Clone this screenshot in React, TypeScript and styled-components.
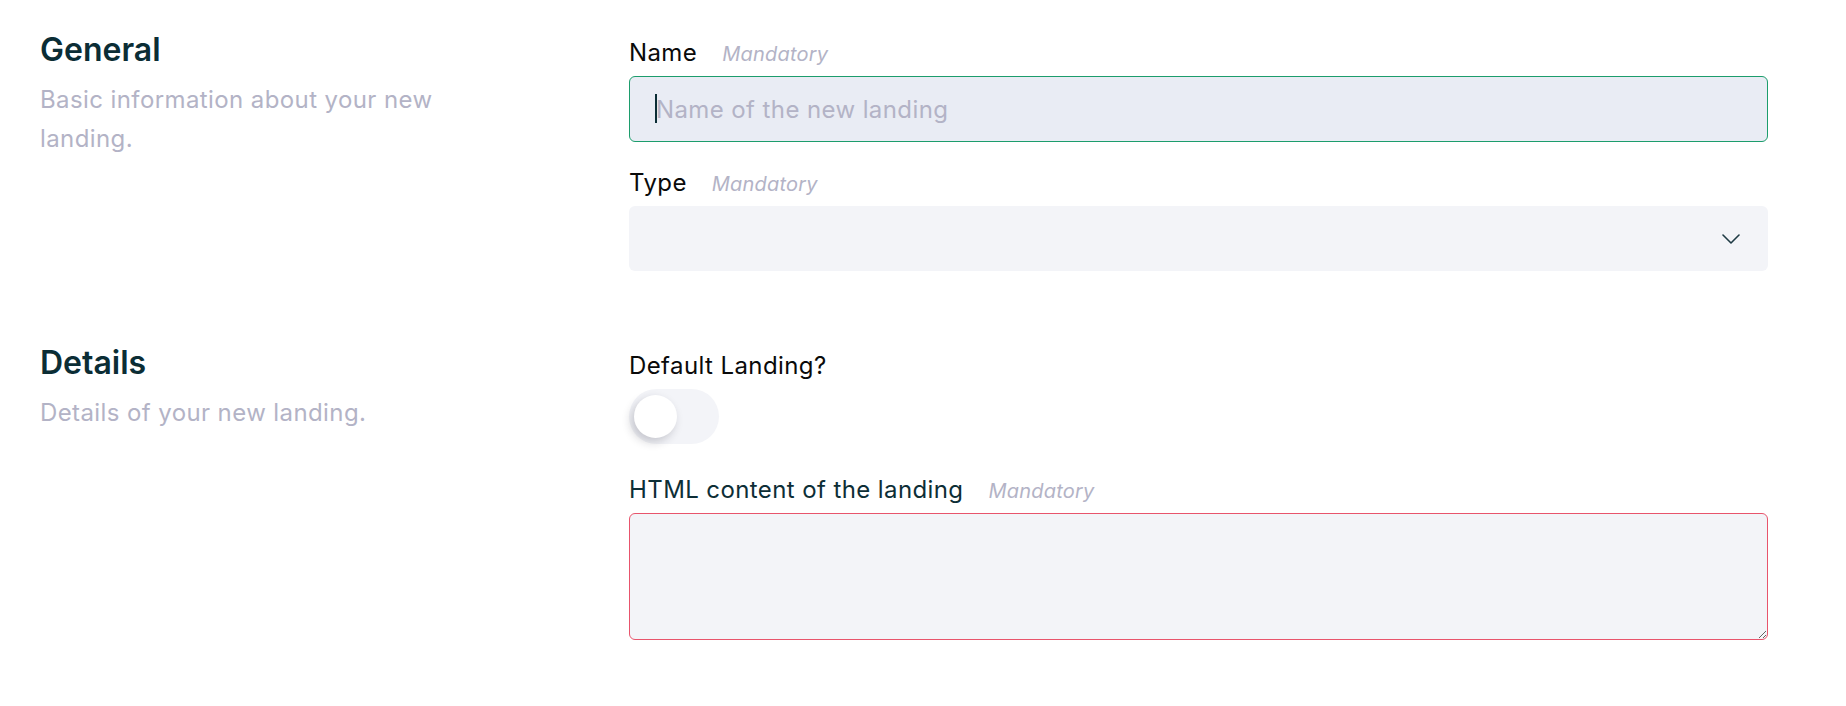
import styled, { createGlobalStyle } from "styled-components";

const GlobalStyle = createGlobalStyle`
  body {
    margin: 0;
    background: #ffffff;
    font-family: Inter, "Liberation Sans", sans-serif;
  }
  * { box-sizing: border-box; }
`;

const Page = styled.div`
  padding: 30px 78px 40px 40px;
  display: flex;
  flex-direction: column;
  gap: 72px;
`;

const Section = styled.section`
  display: grid;
  grid-template-columns: 589px 1fr;
  align-items: start;
`;

const Intro = styled.div`
  display: flex;
  flex-direction: column;
  gap: 10px;
`;

const Heading = styled.h2`
  margin: 0;
  font-size: 32px;
  line-height: 40px;
  font-weight: 600;
  color: #0b2d35;
`;

const Description = styled.p`
  margin: 0;
  max-width: 440px;
  font-size: 24px;
  line-height: 39px;
  letter-spacing: 0.4px;
  color: #b3b3c6;
`;

const Fields = styled.div`
  display: flex;
  flex-direction: column;
  gap: 26px;
  padding-top: 8px;
`;

const Field = styled.div`
  display: flex;
  flex-direction: column;
  gap: 8px;
`;

const LabelRow = styled.div`
  display: flex;
  align-items: baseline;
  gap: 25px;
  height: 30px;
`;

const Label = styled.label<{ $tone?: "dark" | "teal" }>`
  font-size: 24px;
  line-height: 30px;
  letter-spacing: 0.4px;
  color: ${(p) => (p.$tone === "teal" ? "#0d2e36" : "#0a0a0a")};
`;

const Hint = styled.span`
  font-size: 20px;
  font-style: italic;
  letter-spacing: 0.2px;
  color: #b3b3c6;
`;

const InputWrap = styled.div`
  position: relative;
`;

const Caret = styled.span`
  position: absolute;
  left: 26px;
  top: 18px;
  width: 2px;
  height: 29px;
  background: #0b2d35;
  pointer-events: none;
`;

const TextInput = styled.input<{ $focused?: boolean }>`
  display: block;
  width: 100%;
  height: 66px;
  padding: 0 26px;
  border-radius: 6px;
  border: 1px solid ${(p) => (p.$focused ? "#1c9d6c" : "#f3f4f8")};
  background: ${(p) => (p.$focused ? "#e9ecf4" : "#f3f4f8")};
  font-family: inherit;
  font-size: 24px;
  letter-spacing: 0.4px;
  color: #0b2d35;
  outline: none;
  &::placeholder {
    color: #b3b3c6;
  }
`;

const SelectBox = styled.div`
  display: flex;
  align-items: center;
  justify-content: flex-end;
  height: 65px;
  padding-right: 28px;
  border-radius: 6px;
  background: #f3f4f8;
  color: #1e3a44;
  cursor: pointer;
`;

const ToggleTrack = styled.div<{ $on?: boolean }>`
  width: 90px;
  height: 55px;
  padding: 6px 5px;
  margin-bottom: 5px;
  border-radius: 28px;
  background: ${(p) => (p.$on ? "#1c9d6c" : "#f3f4f8")};
  display: flex;
  justify-content: ${(p) => (p.$on ? "flex-end" : "flex-start")};
  cursor: pointer;
`;

const ToggleThumb = styled.span`
  width: 43px;
  height: 43px;
  border-radius: 50%;
  background: #ffffff;
  box-shadow: -3px 4px 10px rgba(30, 30, 50, 0.22);
`;

const TextArea = styled.textarea<{ $invalid?: boolean }>`
  display: block;
  width: 100%;
  height: 127px;
  padding: 14px 26px;
  border-radius: 6px;
  border: 1px solid ${(p) => (p.$invalid ? "#e8546c" : "#f3f4f8")};
  background: #f3f4f8;
  font-family: inherit;
  font-size: 24px;
  outline: none;
  resize: vertical;
`;

function Chevron() {
  return (
    <svg width="18" height="10" viewBox="0 0 18 10" fill="none">
      <path d="M1 1l8 8 8-8" stroke="currentColor" strokeWidth="1.6" strokeLinecap="round" strokeLinejoin="round" />
    </svg>
  );
}

export default function App(): JSX.Element {
  return (
    <>
      <GlobalStyle />
      <Page>
        <Section>
          <Intro>
            <Heading>General</Heading>
            <Description>Basic information about your new landing.</Description>
          </Intro>
          <Fields>
            <Field>
              <LabelRow>
                <Label>Name</Label>
                <Hint>Mandatory</Hint>
              </LabelRow>
              <InputWrap>
                <Caret />
                <TextInput $focused placeholder="Name of the new landing" />
              </InputWrap>
            </Field>
            <Field>
              <LabelRow>
                <Label>Type</Label>
                <Hint>Mandatory</Hint>
              </LabelRow>
              <SelectBox role="combobox">
                <Chevron />
              </SelectBox>
            </Field>
          </Fields>
        </Section>

        <Section>
          <Intro>
            <Heading>Details</Heading>
            <Description>Details of your new landing.</Description>
          </Intro>
          <Fields>
            <Field>
              <LabelRow>
                <Label>Default Landing?</Label>
              </LabelRow>
              <ToggleTrack role="switch" aria-checked={false}>
                <ToggleThumb />
              </ToggleTrack>
            </Field>
            <Field>
              <LabelRow>
                <Label $tone="teal">HTML content of the landing</Label>
                <Hint>Mandatory</Hint>
              </LabelRow>
              <TextArea $invalid />
            </Field>
          </Fields>
        </Section>
      </Page>
    </>
  );
}
